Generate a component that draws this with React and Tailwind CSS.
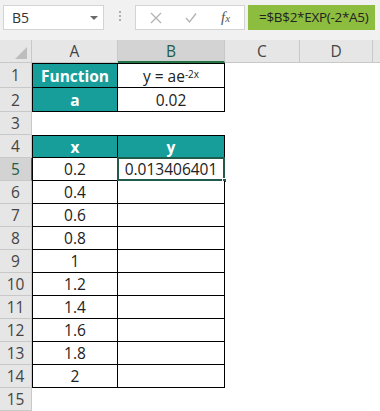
import React from "react";

const xs = ["0.2", "0.4", "0.6", "0.8", "1", "1.2", "1.4", "1.6", "1.8", "2"];

// ─── Toolbar (name box + formula bar) ────────────────────────────────────────
function FormulaBar() {
  return (
    <div className="flex h-[40px] items-start bg-[#f1f1f1] pl-[3px] pt-[5px]">
      <div className="flex h-[25px] w-[101px] items-center justify-between border border-[#d4d4d4] bg-white pl-[8px] pr-[5px]">
        <span className="text-[14px] text-[#333]">B5</span>
        <span className="h-0 w-0 border-x-[4px] border-t-[4px] border-x-transparent border-t-[#6a6a6a]" />
      </div>
      <div className="flex w-[31px] flex-col items-center gap-[2px] pt-[6px]">
        <span className="h-[2px] w-[2px] bg-[#b0b0b0]" />
        <span className="h-[2px] w-[2px] bg-[#b0b0b0]" />
        <span className="h-[2px] w-[2px] bg-[#b0b0b0]" />
      </div>
      <div className="flex h-[25px] w-[110px] items-center border border-[#d4d4d4] bg-white">
        <svg width="12" height="12" viewBox="0 0 12 12" className="ml-[14px]">
          <path d="M1 1 L11 11 M11 1 L1 11" stroke="#b4b4b4" strokeWidth="1.4" fill="none" />
        </svg>
        <svg width="12" height="12" viewBox="0 0 12 12" className="ml-[23px]">
          <path d="M1 6 L4.5 10 L11 1.5" stroke="#b4b4b4" strokeWidth="1.4" fill="none" />
        </svg>
        <span className="ml-[24px] font-['Liberation_Serif',serif] text-[15px] italic text-[#555]">
          f<span className="text-[11px]">x</span>
        </span>
      </div>
      <div className="ml-[3px] flex h-[25px] w-[127px] items-center bg-[#8dbd3e] pl-[11px]">
        <span className="text-[13.5px] tracking-[-0.3px] text-[#222]">=$B$2*EXP(-2*A5)</span>
      </div>
    </div>
  );
}

// ─── Headers ─────────────────────────────────────────────────────────────────
const cols = "grid grid-cols-[32px_86px_107px_75px_73px_1fr] grid-rows-[100%] leading-[18px]";

function ColumnHeader() {
  const head = "flex items-center justify-center border-b border-r border-[#c8c8c8] bg-[#e6e6e6] text-[15.5px] text-[#444]";
  return (
    <div className={`${cols} h-[23px]`}>
      <div className="relative border-b border-r border-[#c8c8c8] bg-[#e6e6e6]">
        <span className="absolute bottom-[3px] right-[4px] h-0 w-0 border-b-[12px] border-l-[12px] border-b-[#bdbdbd] border-l-transparent" />
      </div>
      <div className={head}>A</div>
      <div className="flex items-center justify-center border-b-2 border-r border-b-[#217346] border-r-[#c8c8c8] bg-[#d3d3d3] text-[15.5px] text-[#1e5e46]">B</div>
      <div className={head}>C</div>
      <div className={head}>D</div>
      <div className="border-b border-[#c8c8c8] bg-[#e6e6e6]" />
    </div>
  );
}

function RowHeader({ n, active }) {
  return (
    <div
      className={`flex items-center justify-center border-b border-r text-[15.5px] ${
        active
          ? "border-b-[#c8c8c8] border-r-[#217346] bg-[#d3d3d3] text-[#1e5e46]"
          : "border-[#c8c8c8] bg-[#e6e6e6] text-[#444]"
      }`}
    >
      {n}
    </div>
  );
}

function Row({ n, h = "h-[23px]", active, children }) {
  return (
    <div className={`${cols} ${h}`}>
      <RowHeader n={n} active={active} />
      {children}
    </div>
  );
}

// ─── Sheet ───────────────────────────────────────────────────────────────────
export default function App() {
  const teal = "flex items-center justify-center bg-[#179e9a] font-bold text-white";
  const boxA = "flex items-center justify-center border-b border-l border-r border-black bg-white text-[#222]";
  const boxB = "flex items-center justify-center border-b border-r border-black bg-white text-[#222]";

  return (
    <div className="h-[411px] w-[380px] overflow-hidden bg-white font-['Open_Sans',sans-serif] text-[15.5px]">
      <FormulaBar />
      <ColumnHeader />

      <Row n={1} h="h-[25px]">
        <div className={`${teal} border border-black`}>Function</div>
        <div className={`${boxB} border-t`}>
          <span>
            y = ae<sup className="relative -top-[4px] text-[10px] leading-none">-2x</sup>
          </span>
        </div>
        <div /><div /><div />
      </Row>
      <Row n={2} h="h-[24px]">
        <div className={`${teal} border-b border-l border-r border-black`}>a</div>
        <div className={boxB}>0.02</div>
        <div /><div /><div />
      </Row>
      <Row n={3}>
        <div /><div /><div /><div /><div />
      </Row>
      <Row n={4}>
        <div className={`${teal} border border-black`}>x</div>
        <div className={`${teal} border-b border-r border-t border-black`}>y</div>
        <div /><div /><div />
      </Row>

      {xs.map((x, i) => {
        const n = i + 5;
        return (
          <Row key={n} n={n} active={n === 5}>
            <div className={boxA}>{x}</div>
            <div className={`${boxB} relative`}>
              {n === 5 ? (
                <>
                  <span>0.013406401</span>
                  <span className="absolute -left-[1px] -top-[1px] bottom-[-1px] right-[-1px] border-2 border-[#1f5c4c]" />
                  <span className="absolute -bottom-[3px] -right-[3px] h-[5px] w-[5px] border border-white bg-[#1f5c4c]" />
                </>
              ) : null}
            </div>
            <div /><div /><div />
          </Row>
        );
      })}

      <Row n={15}>
        <div /><div /><div /><div /><div />
      </Row>
    </div>
  );
}
